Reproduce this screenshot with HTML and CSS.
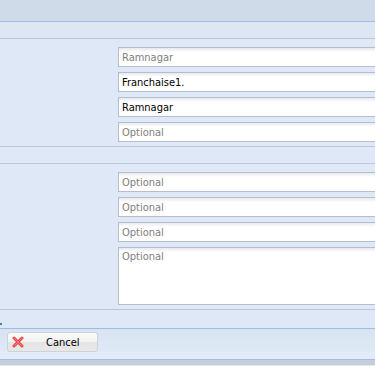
FILE: index.html
```html
<!DOCTYPE html>
<html lang="en">
<head>
    <meta charset="UTF-8">
    <meta name="viewport" content="width=device-width, initial-scale=1.0">
    <title>Franchise</title>
    <link rel="stylesheet" href="styles.css">
</head>
<body>
    <div class="window">
        <div class="header"></div>
        <div class="tbar"></div>
        <div class="section">
            <input type="text" class="field" placeholder="Ramnagar">
            <input type="text" class="field" value="Franchaise1.">
            <input type="text" class="field" value="Ramnagar">
            <input type="text" class="field" placeholder="Optional">
        </div>
        <div class="strip"></div>
        <div class="section">
            <input type="text" class="field" placeholder="Optional">
            <input type="text" class="field" placeholder="Optional">
            <input type="text" class="field" placeholder="Optional">
            <textarea class="field area" placeholder="Optional"></textarea>
        </div>
        <div class="strip last"><span class="dot"></span></div>
        <div class="footer">
            <button type="button" class="btn">
                <svg class="icon" width="12" height="12" viewBox="0 0 12 12">
                    <path d="M2 2 L10 10 M10 2 L2 10" stroke="#e8484e" stroke-width="3" stroke-linecap="round"/>
                    <path d="M2 2 L10 10 M10 2 L2 10" stroke="#f47d82" stroke-width="1" stroke-linecap="round"/>
                </svg>
                <span class="label">Cancel</span>
            </button>
        </div>
        <div class="base"></div>
    </div>
</body>
</html>
```

FILE: styles.css
```css
body {
    margin: 0;
    padding: 0;
    overflow: hidden;
    background-color: #dfe8f6;
    font-family: "DejaVu Sans Condensed", "Liberation Sans", sans-serif;
    font-size: 11px;
}
.window {
    width: 375px;
    height: 366px;
    overflow: hidden;
    background-color: #dfe8f6;
}
.header {
    height: 21px;
    background-color: #cfdbe8;
    border-bottom: 1px solid #9dbde6;
}
.tbar {
    height: 16px;
    background-color: #dde7f4;
    border-bottom: 1px solid #bec7d4;
}
.section {
    display: flex;
    flex-direction: column;
    gap: 5px;
    padding: 8px 0 4px 118px;
    border-bottom: 1px solid #bec7d4;
}
.strip {
    height: 16px;
    border-bottom: 1px solid #bec7d4;
}
.strip.last {
    height: 18px;
    border-bottom: 1px solid #9dbde6;
    position: relative;
}
.dot {
    position: absolute;
    left: 0;
    top: 13px;
    width: 2px;
    height: 2px;
    background-color: #4f79b4;
}
.field {
    box-sizing: border-box;
    width: 300px;
    height: 20px;
    margin: 0;
    padding: 1px 3px 0;
    border: 1px solid #b7bdcc;
    background: linear-gradient(#e6e9ee 0, #ffffff 4px);
    font-family: inherit;
    font-size: 11px;
    color: #000000;
    outline: none;
}
.field::placeholder {
    color: #808080;
    opacity: 1;
}
.area {
    height: 58px;
    padding-top: 2px;
    resize: none;
}
.footer {
    height: 31px;
    padding: 3px 0 0 7px;
    box-sizing: border-box;
    background: linear-gradient(#d7e3f1, #e3ecf7);
    border-bottom: 1px solid #9dbde6;
}
.btn {
    display: flex;
    align-items: center;
    width: 91px;
    height: 20px;
    padding: 0 0 0 4px;
    border: 1px solid #cdd1d8;
    border-radius: 3px;
    background: linear-gradient(#fafafa 0, #f2f2f2 50%, #e4e4e4 51%, #e8e8e8 100%);
    font-family: inherit;
    font-size: 11px;
    color: #000000;
}
.icon {
    flex: none;
}
.label {
    margin-left: 22px;
}
.base {
    height: 5px;
    background-color: #c8ced8;
}
```
